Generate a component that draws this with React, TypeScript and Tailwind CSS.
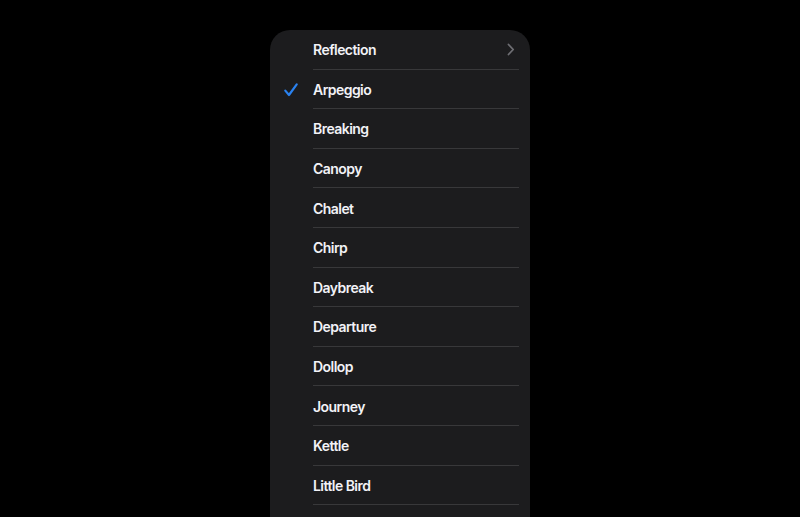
import React from "react";

const items = [
  "Reflection",
  "Arpeggio",
  "Breaking",
  "Canopy",
  "Chalet",
  "Chirp",
  "Daybreak",
  "Departure",
  "Dollop",
  "Journey",
  "Kettle",
  "Little Bird",
];

export default function App() {
  return (
    <div className="w-[800px] h-[517px] bg-black overflow-hidden flex justify-center" style={{ fontFamily: "Inter, 'Liberation Sans', sans-serif" }}>
      <div className="mt-[30px] w-[260px] h-[600px] bg-[#1c1c1e] rounded-[20px] flex flex-col">
        {items.map((name, i) => (
          <div key={name} className="h-[39.6px] flex shrink-0">
            <div className="w-[43px] flex items-center justify-center pr-[2px] pt-[1px]">
              {i === 1 && (
                <svg width="14" height="14" viewBox="0 0 14 14" fill="none">
                  <path d="M1.3 7.6 L5 12 L12.7 1.4" stroke="#2a82f0" strokeWidth="2.2" strokeLinecap="round" strokeLinejoin="round" />
                </svg>
              )}
            </div>
            <div className="flex-1 mr-[11px] flex items-center justify-between border-b border-[#38383a]">
              <span className="text-[14px] font-semibold text-[#f2f2f7] tracking-[-0.55px] pt-[1px]">{name}</span>
              {i === 0 && (
                <svg width="8" height="13" viewBox="0 0 8 13" fill="none" className="mr-[4px]">
                  <path d="M1.5 1.5 L6.2 6.5 L1.5 11.5" stroke="#6e6e73" strokeWidth="1.8" strokeLinecap="round" strokeLinejoin="round" />
                </svg>
              )}
            </div>
          </div>
        ))}
      </div>
    </div>
  );
}
